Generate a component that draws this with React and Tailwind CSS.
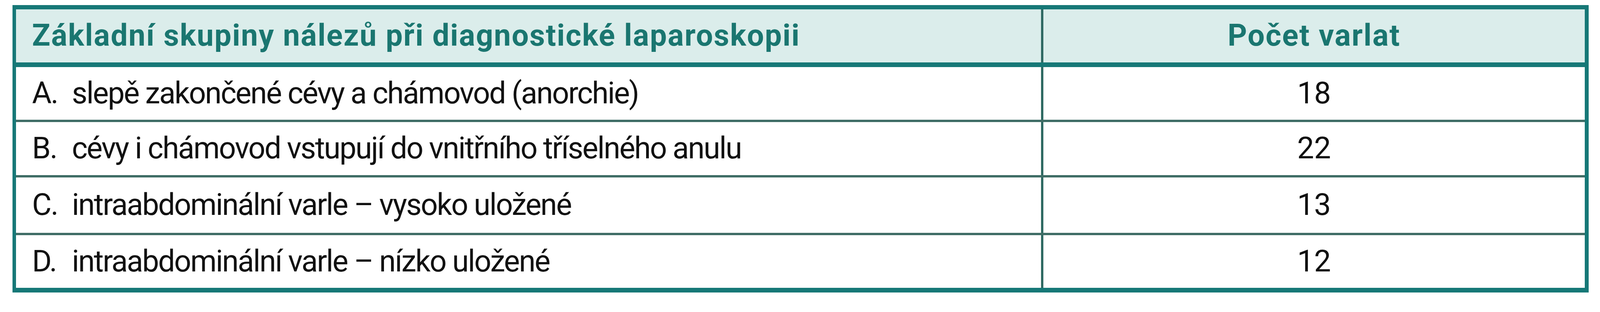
const rows = [
  { letter: 'A.', text: 'slepě zakončené cévy a chámovod (anorchie)', count: 18, h: 'h-[135px]' },
  { letter: 'B.', text: 'cévy i chámovod vstupují do vnitřního tříselného anulu', count: 22, h: 'h-[136px]' },
  { letter: 'C.', text: 'intraabdominální varle – vysoko uložené', count: 13, h: 'h-[142px]' },
  { letter: 'D.', text: 'intraabdominální varle – nízko uložené', count: 12, h: 'h-[135px]' },
]

export default function App() {
  return (
    <div className="w-[4117px] h-[800px] bg-white pt-[13px] pl-[32px] font-['Roboto',sans-serif]">
      <div className="w-[4035px] border-t-[11px] border-b-[12px] border-l-[9px] border-r-[10px] border-[#167877]">
        {/* hlavička */}
        <div className="flex h-[136px] bg-[#dbedeb] border-b-[12px] border-[#167877] box-content">
          <div className="w-[2630px] border-r-[6px] border-[#2f6a63] flex items-center pl-[41px] text-[77px] font-bold text-[#1a7670] tracking-[0.028em]">
            Základní skupiny nálezů při diagnostické laparoskopii
          </div>
          <div className="flex-1 flex items-center justify-center text-[77px] font-bold text-[#1a7670] tracking-[0.03em]">
            Počet varlat
          </div>
        </div>

        {rows.map((r, i) => (
          <div
            key={r.letter}
            className={`flex ${r.h} ${i > 0 ? 'border-t-[6px] border-[#3f6d66]' : ''} text-[77px] text-[#111] box-content`}
          >
            <div className="w-[2630px] border-r-[6px] border-[#2f6a63] flex items-center pl-[41px] tracking-[-0.032em]">
              <span className="w-[102px] shrink-0">{r.letter}</span>
              <span>{r.text}</span>
            </div>
            <div className="flex-1 flex items-center justify-center">{r.count}</div>
          </div>
        ))}
      </div>
    </div>
  )
}
